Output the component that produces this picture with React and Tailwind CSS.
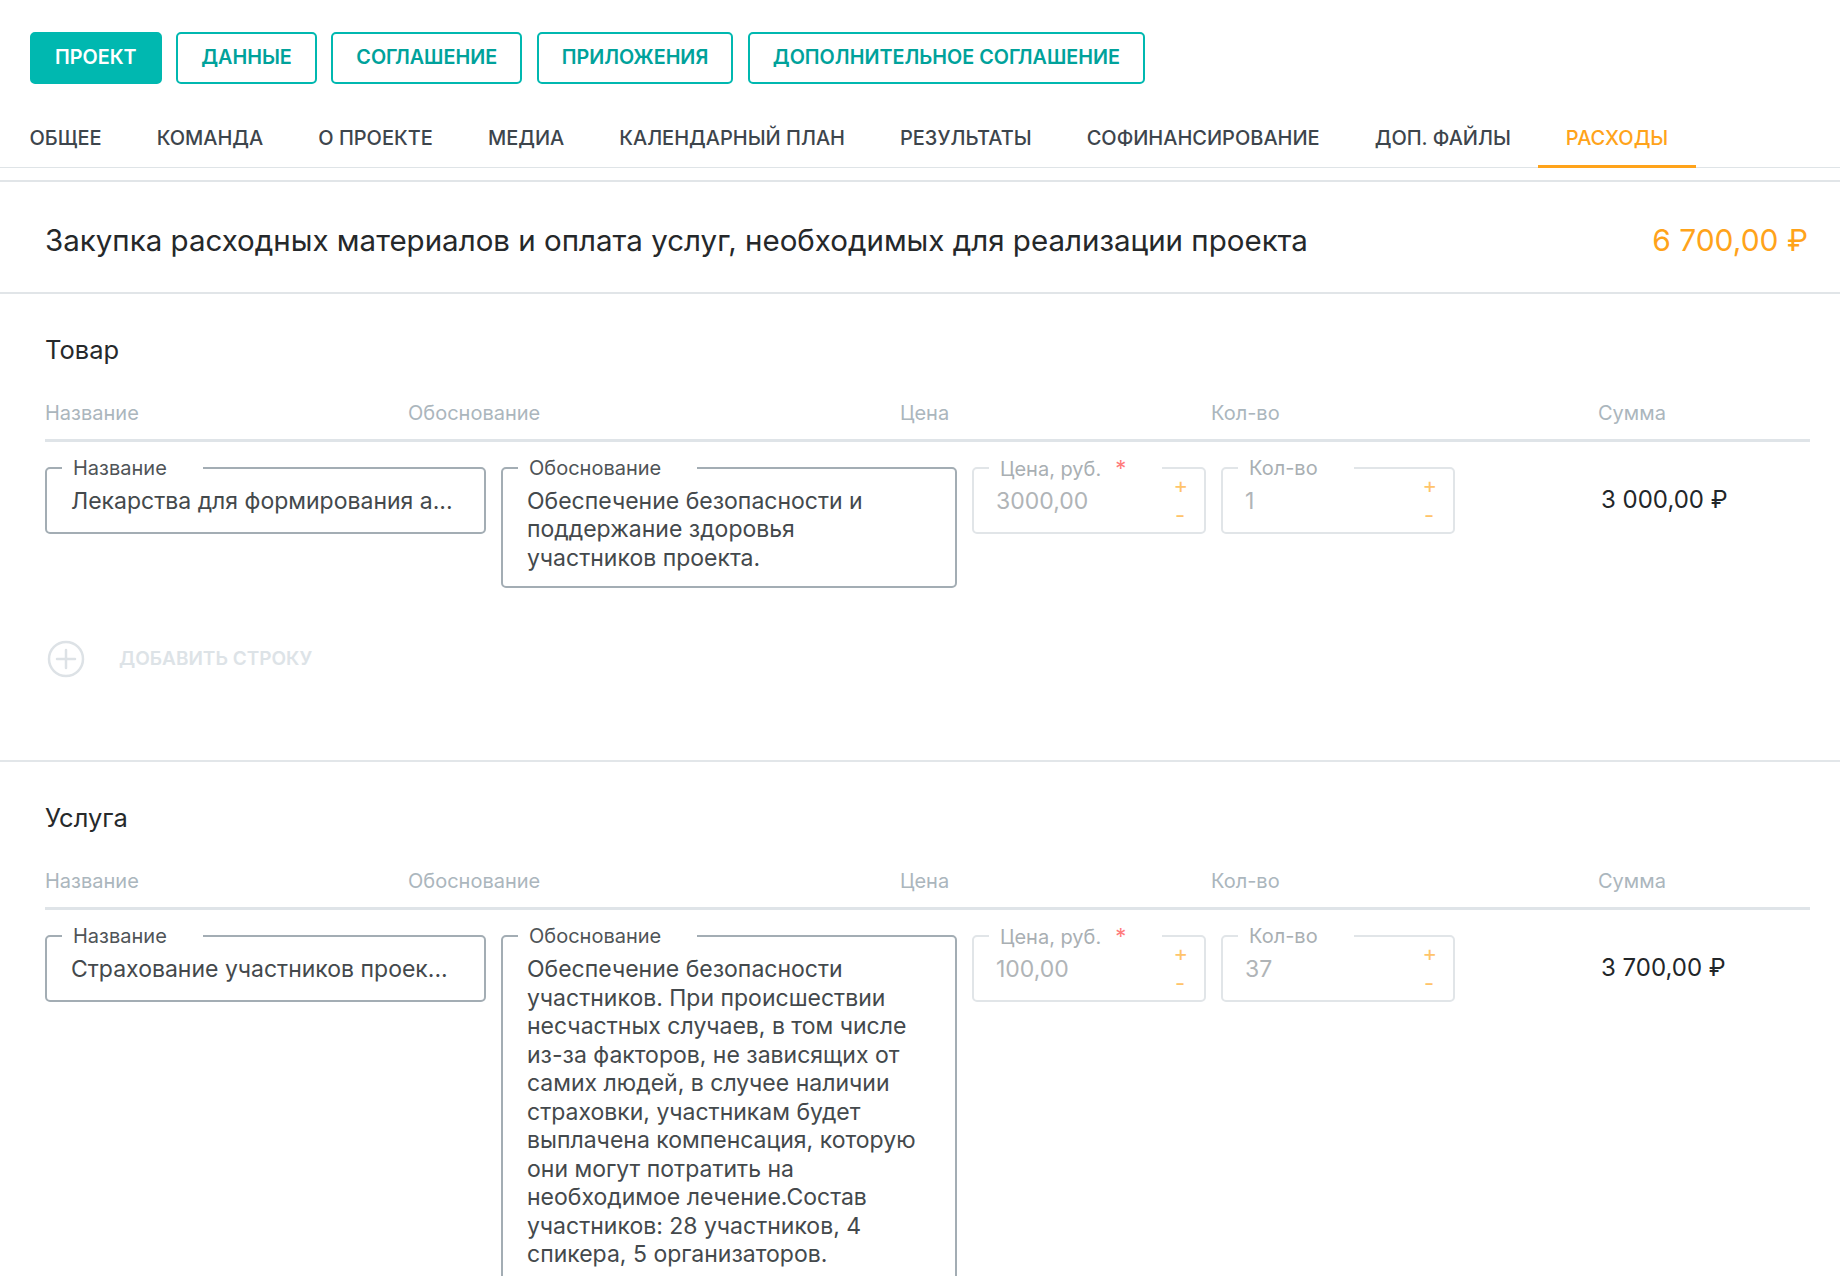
import React from 'react';

const topButtons = ['ПРОЕКТ', 'ДАННЫЕ', 'СОГЛАШЕНИЕ', 'ПРИЛОЖЕНИЯ', 'ДОПОЛНИТЕЛЬНОЕ СОГЛАШЕНИЕ'];
const tabs = ['ОБЩЕЕ', 'КОМАНДА', 'О ПРОЕКТЕ', 'МЕДИА', 'КАЛЕНДАРНЫЙ ПЛАН', 'РЕЗУЛЬТАТЫ', 'СОФИНАНСИРОВАНИЕ', 'ДОП. ФАЙЛЫ', 'РАСХОДЫ'];

const sections = [
  {
    title: 'Товар',
    name: 'Лекарства для формирования а...',
    reason: ['Обеспечение безопасности и', 'поддержание здоровья', 'участников проекта.'],
    price: '3000,00',
    qty: '1',
    sum: '3 000,00 ₽',
    addRow: true,
  },
  {
    title: 'Услуга',
    name: 'Страхование участников проек...',
    reason: [
      'Обеспечение безопасности',
      'участников. При происшествии',
      'несчастных случаев, в том числе',
      'из-за факторов, не зависящих от',
      'самих людей, в случее наличии',
      'страховки, участникам будет',
      'выплачена компенсация, которую',
      'они могут потратить на',
      'необходимое лечение.Состав',
      'участников: 28 участников, 4',
      'спикера, 5 организаторов.',
    ],
    price: '100,00',
    qty: '37',
    sum: '3 700,00 ₽',
    addRow: false,
  },
];

function Label({ children, disabled, required }) {
  return (
    <span
      className={`absolute left-[15px] top-[-13px] bg-white pl-[11px] pr-[36px] text-[20px] leading-[24px] ${disabled ? 'text-[#a9afb3]' : 'text-[#4f5457]'}`}
    >
      {children}
      {required && <span className="ml-[14px] text-[22px] text-[#ff7b7b]">*</span>}
    </span>
  );
}

function TextField({ label, width, lines }) {
  return (
    <div className={`relative ${width} shrink-0 rounded-[5px] border-2 border-[#a3adb4] px-[24px] pt-[18px] pb-[14px] min-h-[67px]`}>
      <Label>{label}</Label>
      <div className="text-[23px] leading-[28.5px] text-[#44494c]">
        {lines.map((l) => (
          <div key={l} className="whitespace-nowrap overflow-hidden">{l}</div>
        ))}
      </div>
    </div>
  );
}

function NumberField({ label, value, required }) {
  return (
    <div className="relative w-[234px] h-[67px] shrink-0 rounded-[5px] border-2 border-[#e1e5e8] px-[22px] pt-[18px]">
      <Label disabled required={required}>{label}</Label>
      <div className="text-[23px] leading-[28.5px] text-[#b0b4b7]">{value}</div>
      <span className="absolute right-[16px] top-[4px] text-[22px] leading-[24px] text-[#ffc46a]">+</span>
      <span className="absolute right-[19px] top-[34px] text-[22px] leading-[24px] text-[#ffc46a]">-</span>
    </div>
  );
}

function Section({ s, last }) {
  return (
    <div className={`pl-[45px] pr-[30px] pt-[41px] ${last ? 'pb-[40px]' : 'pb-[81px] border-b-2 border-[#e2e6e9]'}`}>
      <h2 className="text-[25.5px] leading-[30px] text-[#26292b]">{s.title}</h2>
      <div className="mt-[36px] flex text-[20px] leading-[24px] text-[#abb6bd] pb-[14px] border-b-[3px] border-[#dfe4e8]">
        <div className="w-[363px]">Название</div>
        <div className="w-[492px]">Обоснование</div>
        <div className="w-[311px]">Цена</div>
        <div className="w-[387px]">Кол-во</div>
        <div>Сумма</div>
      </div>
      <div className="mt-[25px] flex items-start">
        <TextField label="Название" width="w-[441px]" lines={[s.name]} />
        <div className="ml-[15px]">
          <TextField label="Обоснование" width="w-[456px]" lines={s.reason} />
        </div>
        <div className="ml-[15px]">
          <NumberField label="Цена, руб." value={s.price} required />
        </div>
        <div className="ml-[15px]">
          <NumberField label="Кол-во" value={s.qty} />
        </div>
        <div className="ml-[146px] pt-[19px] text-[24px] leading-[28px] text-[#222629]">{s.sum}</div>
      </div>
      {s.addRow && (
        <div className="mt-[51px] flex items-center">
          <svg width="40" height="40" viewBox="0 0 40 40" fill="none" className="ml-[1px]">
            <circle cx="20" cy="20" r="17" stroke="#dde2e6" strokeWidth="2.5" />
            <path d="M20 11v18M11 20h18" stroke="#dde2e6" strokeWidth="2.5" strokeLinecap="round" />
          </svg>
          <span className="ml-[33px] text-[19px] font-semibold text-[#dde3e7]">ДОБАВИТЬ СТРОКУ</span>
        </div>
      )}
    </div>
  );
}

export default function App() {
  return (
    <div className="min-h-screen bg-white font-['Inter','Roboto',sans-serif]">
      <div className="flex gap-[14.5px] pl-[30px] pt-[32px]">
        {topButtons.map((b, i) => (
          <button
            key={b}
            type="button"
            className={`h-[52px] rounded-[5px] border-2 border-[#00b8b0] px-[23px] text-[19.8px] font-semibold ${i === 0 ? 'bg-[#00b8b0] text-white' : 'bg-white text-[#00a29b]'}`}
          >
            {b}
          </button>
        ))}
      </div>
      <div className="mt-[22px] flex border-b-[1.5px] border-[#dfe4e7] pl-[2px]">
        {tabs.map((t) => {
          const active = t === 'РАСХОДЫ';
          return (
            <div
              key={t}
              className={`px-[27.5px] h-[62px] pt-[4px] flex items-center text-[20px] font-medium mb-[-1.5px] border-b-[3px] ${active ? 'text-[#ffa31a] border-[#ffa31a]' : 'text-[#3d454c] border-transparent'}`}
            >
              {t}
            </div>
          );
        })}
      </div>
      <div className="mt-[12px] border-t-2 border-[#e1e5e8]">
        <div className="flex items-center justify-between pl-[45px] pr-[32px] h-[112px] pt-[8px] border-b-2 border-[#e1e5e8]">
          <h1 className="text-[29.5px] text-[#25282a]">
            Закупка расходных материалов и оплата услуг, необходимых для реализации проекта
          </h1>
          <div className="text-[30px] text-[#ffa31a]">6 700,00 ₽</div>
        </div>
        {sections.map((s, i) => (
          <Section key={s.title} s={s} last={i === sections.length - 1} />
        ))}
      </div>
    </div>
  );
}
